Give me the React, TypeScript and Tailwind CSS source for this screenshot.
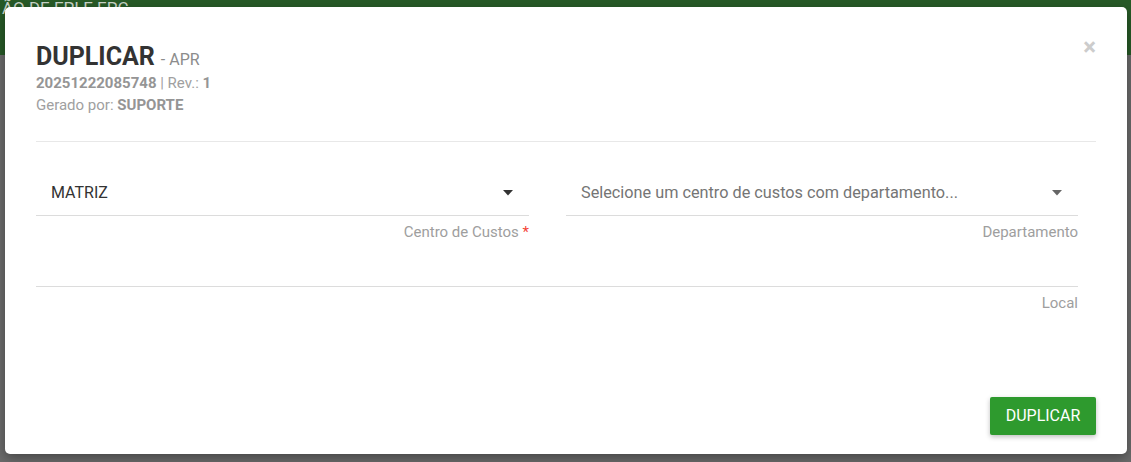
import React from "react";

const Caret = ({ className }: { className: string }) => (
  <svg width="10" height="6" viewBox="0 0 10 6" className={className}>
    <path d="M0 0h10L5 5.5z" fill="currentColor" />
  </svg>
);

const App = () => {
  return (
    <div className="relative h-[462px] w-[1131px] overflow-hidden bg-[#6b6b6b] font-['Roboto',sans-serif]">
      {/* page behind the overlay */}
      <div className="h-[55px] bg-[#275a27] pl-[2px] text-[17px] leading-[17px] text-[#c9d4c9] whitespace-nowrap">
        ÃO DE EPI E EPC
      </div>
      <div className="h-[407px] bg-[#6b6b6b]" />

      {/* modal */}
      <div className="absolute left-[5px] top-[7px] flex h-[447px] w-[1122px] flex-col rounded-[5px] bg-white shadow-[0_4px_12px_rgba(0,0,0,0.35)]">
        <div className="relative px-[31px] pt-[36px]">
          <div className="flex items-baseline gap-[6px]">
            <h4 className="text-[25px] font-bold leading-[28px] text-[#333]">DUPLICAR</h4>
            <span className="text-[16px] text-[#8c8c8c]">- APR</span>
          </div>
          <div className="text-[15px] leading-[22px] text-[#a0a0a0]">
            <b className="font-bold text-[#959595]">20251222085748</b> | Rev.: <b className="font-bold text-[#959595]">1</b>
          </div>
          <div className="text-[15px] leading-[22px] text-[#a0a0a0]">
            Gerado por: <b className="font-bold text-[#959595]">SUPORTE</b>
          </div>
          <button className="absolute right-[31px] top-[28px] text-[24px] font-bold leading-none text-[#cccccc]">
            ×
          </button>
        </div>

        <div className="mx-[31px] mt-[25px] border-t border-[#e8e8e8]" />

        <div className="mt-[29px] pl-[31px]">
          <div className="flex gap-[37px]">
            <div className="w-[493px]">
              <div className="flex h-[45px] items-center justify-between border-b border-[#dcdcdc] pl-[15px] pr-[16px]">
                <span className="text-[16px] text-[#333]">MATRIZ</span>
                <Caret className="text-[#333]" />
              </div>
              <div className="mt-[6px] text-right text-[15px] leading-[20px] text-[#9e9e9e]">
                Centro de Custos <span className="text-[#f44336]">*</span>
              </div>
            </div>
            <div className="w-[512px]">
              <div className="flex h-[45px] items-center justify-between border-b border-[#dcdcdc] pl-[15px] pr-[16px]">
                <span className="text-[16.25px] text-[#757575]">Selecione um centro de custos com departamento...</span>
                <Caret className="text-[#666]" />
              </div>
              <div className="mt-[6px] text-right text-[15px] leading-[20px] text-[#9e9e9e]">Departamento</div>
            </div>
          </div>
          <div className="w-[1042px]">
            <div className="h-[45px] border-b border-[#dcdcdc]" />
            <div className="mt-[6px] text-right text-[15px] leading-[20px] text-[#9e9e9e]">Local</div>
          </div>
        </div>

        <div className="mt-auto flex justify-end px-[31px] pb-[19px]">
          <button className="h-[38px] w-[106px] rounded-[2px] bg-[#2e9a2e] text-[16px] text-white shadow-[0_2px_5px_rgba(0,0,0,0.25)]">
            DUPLICAR
          </button>
        </div>
      </div>
    </div>
  );
};

export default App;
